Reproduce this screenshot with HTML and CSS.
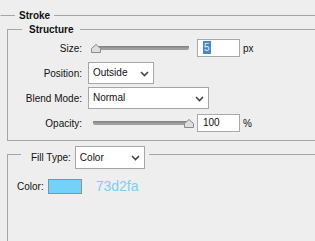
FILE: index.html
```html
<!DOCTYPE html>
<html lang="en">
<head>
    <meta charset="UTF-8">
    <title>Stroke</title>
    <link rel="stylesheet" href="styles.css">
</head>
<body>
    <fieldset class="group outer">
        <legend class="title">Stroke</legend>

        <fieldset class="group structure">
            <legend class="title sub">Structure</legend>

            <div class="row">
                <span class="lbl">Size:</span>
                <div class="slider">
                    <svg width="105" height="22" viewBox="0 0 105 22">
                        <rect x="2" y="9" width="96" height="4" rx="2" fill="#9f9f9f"/>
                        <rect x="2" y="9" width="96" height="1.5" fill="#858585"/>
                        <path d="M0.5 15.5 V11.5 L5 7.5 L9.5 11.5 V15.5 Z" fill="#dedede" stroke="#8c8c8c"/>
                    </svg>
                </div>
                <div class="field"><span class="sel">5</span></div>
                <span class="unit">px</span>
            </div>

            <div class="row">
                <span class="lbl">Position:</span>
                <div class="dropdown pos">Outside
                    <svg class="chev" width="9" height="6" viewBox="0 0 9 6"><path d="M1 1 L4.5 4.5 L8 1" fill="none" stroke="#444" stroke-width="1.6"/></svg>
                </div>
            </div>

            <div class="row">
                <span class="lbl">Blend Mode:</span>
                <div class="dropdown blend">Normal
                    <svg class="chev" width="9" height="6" viewBox="0 0 9 6"><path d="M1 1 L4.5 4.5 L8 1" fill="none" stroke="#444" stroke-width="1.6"/></svg>
                </div>
            </div>

            <div class="row">
                <span class="lbl">Opacity:</span>
                <div class="slider">
                    <svg width="105" height="22" viewBox="0 0 105 22">
                        <rect x="2" y="9" width="96" height="4" rx="2" fill="#9f9f9f"/>
                        <rect x="2" y="9" width="96" height="1.5" fill="#858585"/>
                        <path d="M93.5 15.5 V11.5 L98 7.5 L102.5 11.5 V15.5 Z" fill="#dedede" stroke="#8c8c8c"/>
                    </svg>
                </div>
                <div class="field">100</div>
                <span class="unit">%</span>
            </div>
        </fieldset>

        <fieldset class="group fill">
            <legend class="fill-head">
                <span class="lbl-inline">Fill Type:</span>
                <div class="dropdown type">Color
                    <svg class="chev" width="9" height="6" viewBox="0 0 9 6"><path d="M1 1 L4.5 4.5 L8 1" fill="none" stroke="#444" stroke-width="1.6"/></svg>
                </div>
            </legend>

            <div class="color-row">
                <span class="lbl-inline">Color:</span>
                <span class="swatch"></span>
                <span class="hex">73d2fa</span>
            </div>
        </fieldset>
    </fieldset>
</body>
</html>
```

FILE: styles.css
```css
body {
    margin: 0;
    background: #eeeeee;
    font-family: "Liberation Sans", Arial, sans-serif;
    font-size: 10px;
    color: #111;
    overflow: hidden;
    height: 241px;
}
.group {
    margin: 0;
    padding: 0;
    border: 1px solid #a6a6a6;
    min-width: 0;
    box-sizing: border-box;
}
.title {
    font-weight: bold;
    font-size: 10px;
    line-height: 13px;
    padding: 0 4px;
}
.outer {
    margin: 9px 0 0 0;
    width: 315px;
    height: 232px;
    border-left-color: transparent;
    border-right: 0;
    border-bottom: 0;
}
.outer > .title {
    margin-left: 14px;
}
.structure {
    margin: 1px 0 0 6px;
    width: 308px;
    padding: 1px 0 6px 0;
    border-right: 0;
}
.structure > .title {
    margin-left: 14px;
    padding: 0 7px;
}
.row {
    display: flex;
    align-items: center;
    height: 22px;
    margin-bottom: 3px;
}
.row:last-child {
    margin-bottom: 0;
}
.lbl {
    width: 74px;
    text-align: right;
    margin-right: 6px;
}
.slider {
    margin-left: 3px;
    width: 105px;
    height: 22px;
}
.slider svg {
    display: block;
}
.field {
    width: 36px;
    height: 16px;
    margin-left: 1px;
    background: #fff;
    border: 1px solid #a9a9a9;
    line-height: 16px;
    padding-left: 5px;
}
.sel {
    background: #4a86c8;
    color: #dfefff;
    padding: 1px 1px;
}
.unit {
    margin-left: 3px;
}
.dropdown {
    position: relative;
    box-sizing: border-box;
    height: 22px;
    line-height: 20px;
    background: #fff;
    border: 1px solid #a6a6a6;
    padding-left: 4px;
}
.chev {
    position: absolute;
    right: 4px;
    top: 8px;
}
.pos {
    width: 66px;
}
.blend {
    width: 121px;
}
.fill {
    margin: 5px 0 0 6px;
    width: 308px;
    height: 95px;
    padding: 0;
    border-right: 0;
    border-bottom: 0;
}
.fill-head {
    display: flex;
    align-items: flex-start;
    height: 16px;
    margin-left: 13px;
    padding: 0 4px 0 10px;
}
.fill-head .lbl-inline {
    line-height: 23px;
}
.type {
    width: 70px;
    height: 23px;
    line-height: 21px;
    margin-left: 4px;
}
.color-row {
    display: flex;
    align-items: center;
    margin: 16px 0 0 9px;
    height: 16px;
}
.swatch {
    width: 32px;
    height: 13px;
    margin-left: 4px;
    background: #73d2fa;
    border: 1px solid #8f8f8f;
}
.hex {
    margin-left: 14px;
    font-size: 14px;
    color: #7ccff0;
}
```
